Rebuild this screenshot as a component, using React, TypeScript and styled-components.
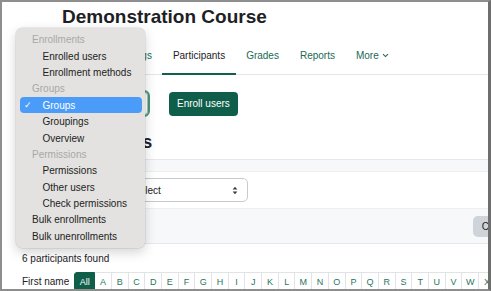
import React from "react";
import styled, { createGlobalStyle } from "styled-components";

const Global = createGlobalStyle`
  html, body { margin: 0; padding: 0; background: #ffffff; }
  body { font-family: "Liberation Sans", Arial, sans-serif; color: #1d2125; }
  * { box-sizing: border-box; }
`;

const Frame = styled.div`
  position: relative;
  width: 491px;
  height: 291px;
  overflow: hidden;
  background: #ffffff;
  border: 2px solid #8e8e8e;
  border-right: 3px solid #6e6e6e;
`;

const Title = styled.h1`
  margin: 4px 0 0 60px;
  font-size: 19px;
  line-height: 22px;
  font-weight: 700;
  color: #1d2125;
`;

const Nav = styled.nav`
  display: flex;
  margin: 9px 0 0 50px;
  border-bottom: 1px solid #e3e6e9;
`;

const Tab = styled.div<{ $active?: boolean }>`
  display: flex;
  align-items: center;
  gap: 3px;
  height: 38px;
  padding: 0 10.5px;
  margin-bottom: -1px;
  font-size: 10px;
  color: ${(p) => (p.$active ? "#1d2125" : "#196a55")};
  border-bottom: 2px solid ${(p) => (p.$active ? "#10604b" : "transparent")};
`;

const ActionRow = styled.div`
  display: flex;
  align-items: center;
  gap: 19px;
  margin: 15px 0 0 50px;
`;

const UrlSelect = styled.div`
  display: flex;
  align-items: center;
  width: 98px;
  height: 27px;
  padding-left: 10px;
  font-size: 10px;
  border: 2px solid #4a937f;
  border-radius: 6px;
  box-shadow: inset 0 0 0 1px #9cc4b8;
`;

const PrimaryButton = styled.div`
  display: flex;
  align-items: center;
  flex: none;
  height: 24px;
  padding: 0 8px;
  font-size: 10px;
  white-space: nowrap;
  color: #ffffff;
  background: #0f5e4a;
  border-radius: 4px;
`;

const Heading = styled.h2`
  margin: 14px 0 0 50px;
  font-size: 17.5px;
  line-height: 22px;
  font-weight: 700;
  color: #1d2125;
`;

const FilterCard = styled.div`
  width: 608px;
  margin: 6px 0 0 20px;
  border-top: 1px solid #e6e8eb;
  border-bottom: 1px solid #e6e8eb;
`;

const FilterStrip = styled.div`
  height: 11px;
  background: #f7f8f9;
`;

const FilterRow = styled.div`
  display: flex;
  align-items: center;
  height: 37px;
  padding-left: 98px;
  background: #ffffff;
  border-top: 1px solid #eceef0;
`;

const FieldSelect = styled.div`
  display: flex;
  align-items: center;
  justify-content: space-between;
  width: 128px;
  height: 24px;
  padding: 0 9px 0 12px;
  font-size: 10px;
  color: #1d2125;
  border: 1px solid #c6cbd0;
  border-radius: 5px;
`;

const FilterFooter = styled.div`
  display: flex;
  justify-content: flex-end;
  align-items: center;
  gap: 5px;
  height: 35px;
  padding-right: 16px;
  background: #f7f8f9;
  border-top: 1px solid #eceef0;
`;

const GreyButton = styled.div`
  display: flex;
  align-items: center;
  flex: none;
  height: 21px;
  padding: 0 9px;
  font-size: 10px;
  white-space: nowrap;
  color: #1d2125;
  background: #ced4da;
  border-radius: 5px;
`;

const Count = styled.div`
  margin: 9px 0 0 20px;
  font-size: 10px;
  line-height: 12px;
  color: #1d2125;
`;

const InitialsBar = styled.div`
  display: flex;
  align-items: center;
  width: 700px;
  margin: 7px 0 0 20px;
`;

const InitialsLabel = styled.span`
  flex: none;
  font-size: 10px;
  white-space: nowrap;
  color: #1d2125;
  margin-right: 5px;
`;

const Initial = styled.div<{ $active?: boolean }>`
  display: flex;
  align-items: center;
  justify-content: center;
  flex: none;
  width: ${(p) => (p.$active ? "21px" : "16.7px")};
  height: 19px;
  font-size: 9px;
  color: ${(p) => (p.$active ? "#ffffff" : "#2a7560")};
  background: ${(p) => (p.$active ? "#0f5e4a" : "#ffffff")};
  border: 1px solid ${(p) => (p.$active ? "#0f5e4a" : "#e1e4e7")};
  border-left: ${(p) => (p.$active ? "1px solid #0f5e4a" : "none")};
  border-radius: ${(p) => (p.$active ? "3px 0 0 3px" : "0")};
`;

const Menu = styled.div`
  position: absolute;
  left: 14px;
  top: 26px;
  width: 129px;
  padding: 3.5px 3.5px;
  background: #e3e2e0;
  border-radius: 6px;
  box-shadow: 0 0 0 0.5px rgba(0, 0, 0, 0.12), 0 4px 12px rgba(0, 0, 0, 0.18);
`;

const MenuItem = styled.div<{ $kind: "header" | "sub" | "top"; $selected?: boolean }>`
  position: relative;
  display: flex;
  align-items: center;
  height: 16.4px;
  padding-left: ${(p) => (p.$kind === "sub" ? "23px" : "12.5px")};
  font-size: 10px;
  white-space: nowrap;
  border-radius: 4px;
  color: ${(p) => (p.$selected ? "#ffffff" : p.$kind === "header" ? "#a8a8a7" : "#222222")};
  background: ${(p) => (p.$selected ? "#4b9cf8" : "transparent")};
`;

const Check = styled.span`
  position: absolute;
  left: 4px;
  font-size: 9px;
`;

const Chevron = () => (
  <svg width="7" height="5" viewBox="0 0 7 5">
    <path d="M1 1.2 L3.5 3.6 L6 1.2" fill="none" stroke="currentColor" strokeWidth="1.1" />
  </svg>
);

const UpDown = () => (
  <svg width="6" height="9" viewBox="0 0 6 9">
    <path d="M3 0.8 L5.4 3.6 H0.6 Z M3 8.2 L5.4 5.4 H0.6 Z" fill="#3a3f44" />
  </svg>
);

const menu: { label: string; kind: "header" | "sub" | "top"; selected?: boolean }[] = [
  { label: "Enrollments", kind: "header" },
  { label: "Enrolled users", kind: "sub" },
  { label: "Enrollment methods", kind: "sub" },
  { label: "Groups", kind: "header" },
  { label: "Groups", kind: "sub", selected: true },
  { label: "Groupings", kind: "sub" },
  { label: "Overview", kind: "sub" },
  { label: "Permissions", kind: "header" },
  { label: "Permissions", kind: "sub" },
  { label: "Other users", kind: "sub" },
  { label: "Check permissions", kind: "sub" },
  { label: "Bulk enrollments", kind: "top" },
  { label: "Bulk unenrollments", kind: "top" },
];

const letters = "ABCDEFGHIJKLMNOPQRSTUVWXYZ".split("");

export default function App() {
  return (
    <>
      <Global />
      <Frame>
        <Title>Demonstration Course</Title>
        <Nav>
          <Tab>Course</Tab>
          <Tab>Settings</Tab>
          <Tab $active>Participants</Tab>
          <Tab>Grades</Tab>
          <Tab>Reports</Tab>
          <Tab>
            More <Chevron />
          </Tab>
        </Nav>
        <ActionRow>
          <UrlSelect>Enrolled users</UrlSelect>
          <PrimaryButton>Enroll users</PrimaryButton>
        </ActionRow>
        <Heading>Participants</Heading>
        <FilterCard>
          <FilterStrip />
          <FilterRow>
            <FieldSelect>
              <span>Select</span>
              <UpDown />
            </FieldSelect>
          </FilterRow>
          <FilterFooter>
            <GreyButton>Clear filters</GreyButton>
            <PrimaryButton>Apply filters</PrimaryButton>
          </FilterFooter>
        </FilterCard>
        <Count>6 participants found</Count>
        <InitialsBar>
          <InitialsLabel>First name</InitialsLabel>
          <Initial $active>All</Initial>
          {letters.map((l) => (
            <Initial key={l}>{l}</Initial>
          ))}
        </InitialsBar>
        <Menu>
          {menu.map((m, i) => (
            <MenuItem key={i} $kind={m.kind} $selected={m.selected}>
              {m.selected && <Check>✓</Check>}
              {m.label}
            </MenuItem>
          ))}
        </Menu>
      </Frame>
    </>
  );
}
